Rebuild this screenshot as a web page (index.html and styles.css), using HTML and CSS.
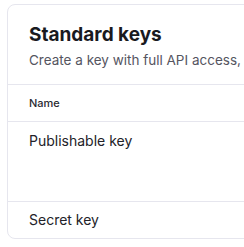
FILE: index.html
```html
<!DOCTYPE html>
<html>
<head>
<meta charset="utf-8">
<link rel="stylesheet" href="styles.css">
</head>
<body>
<div class="card">
  <div class="card-header">
    <h2 class="title">Standard keys</h2>
    <p class="subtitle">Create a key with full API access, or restricted access to specific resources.</p>
  </div>
  <div class="table">
    <div class="row head"><span class="cell">Name</span></div>
    <div class="row tall"><span class="cell">Publishable key</span></div>
    <div class="row last"><span class="cell">Secret key</span></div>
  </div>
</div>
</body>
</html>
```
FILE: styles.css
```css
html, body {
  margin: 0;
  padding: 0;
  background: #ffffff;
  overflow: hidden;
}
body {
  font-family: Inter, "Noto Sans", sans-serif;
  color: #1f1f24;
  padding: 4px 0 0 7px;
}
.card {
  width: 520px;
  border: 1px solid #e6e6ee;
  border-radius: 8px;
  box-sizing: border-box;
}
.card-header {
  padding: 18px 21px 0 21px;
  height: 80px;
  box-sizing: border-box;
  border-bottom: 1px solid #e6e6ee;
}
.title {
  margin: 0;
  font-size: 19px;
  line-height: 24px;
  font-weight: 700;
  color: #1a1a1f;
}
.subtitle {
  margin: 3px 0 0 0;
  font-size: 13.5px;
  line-height: 20px;
  color: #55555f;
  white-space: nowrap;
}
.row {
  padding: 0 21px;
  border-bottom: 1px solid #e6e6ee;
  height: 37px;
  box-sizing: border-box;
  display: flex;
  align-items: center;
}
.row.last {
  border-bottom: none;
  height: 36px;
}
.row.tall {
  height: 80px;
  align-items: flex-start;
  padding-top: 9px;
}
.row .cell {
  font-size: 14px;
  line-height: 20px;
  color: #222228;
}
.row.head .cell {
  font-size: 11px;
  line-height: 16px;
  font-weight: 500;
  color: #2a2a30;
}
```
